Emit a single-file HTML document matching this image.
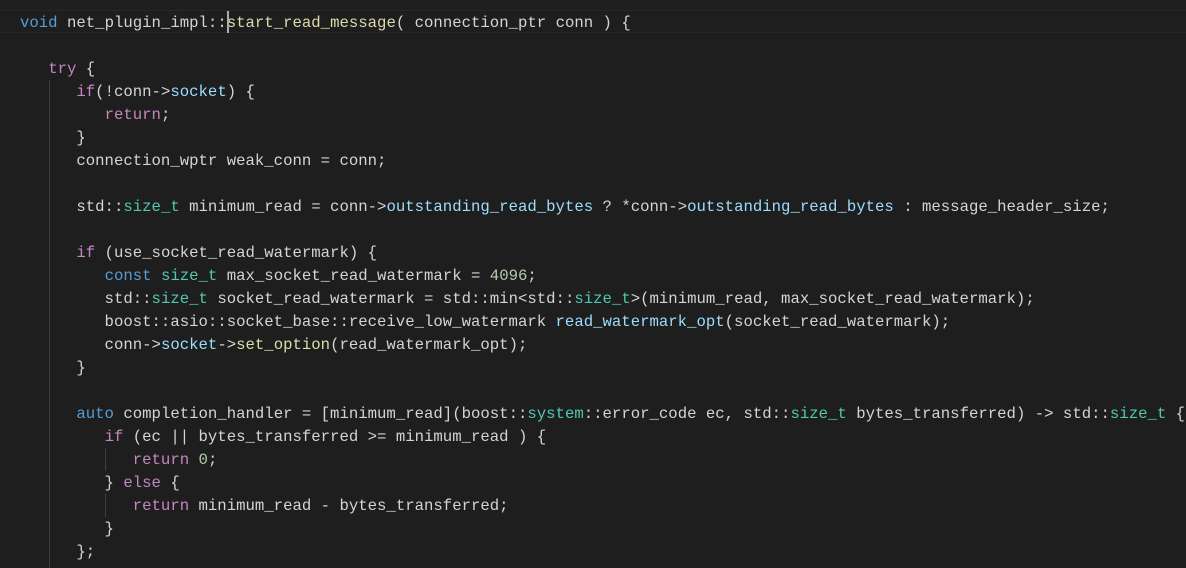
<!DOCTYPE html>
<html><head><style>
html,body{margin:0;padding:0;background:#1e1e1e;width:1186px;height:568px;overflow:hidden}
.l{position:absolute;left:20px;height:23px;line-height:25px;white-space:pre;font-family:"Liberation Mono",monospace;font-size:15.67px;color:#d4d4d4}
.k{color:#569cd6}.c{color:#c586c0}.v{color:#9cdcfe}.t{color:#4ec9b0}.f{color:#dcdcaa}.n{color:#b5cea8}
.g{position:absolute;width:1px;background:#404040}
#hl{position:absolute;left:0;top:10px;width:1186px;height:23px;border-top:1px solid #282828;border-bottom:1px solid #282828;box-sizing:border-box}
#cur{position:absolute;left:227px;top:11px;width:2px;height:22px;background:#aeafad}
</style></head><body>
<div id="hl"></div>
<div class="g" style="left:49px;top:80px;height:488px"></div>
<div class="g" style="left:105px;top:448px;height:23px"></div>
<div class="g" style="left:105px;top:494px;height:23px"></div>
<div class="l" style="top:11px"><span class="k">void</span> net_plugin_impl::<span class="f">start_read_message</span>( connection_ptr conn ) {</div>
<div id="cur"></div>
<div class="l" style="top:57px">   <span class="c">try</span> {</div>
<div class="l" style="top:80px">      <span class="c">if</span>(!conn-&gt;<span class="v">socket</span>) {</div>
<div class="l" style="top:103px">         <span class="c">return</span>;</div>
<div class="l" style="top:126px">      }</div>
<div class="l" style="top:149px">      connection_wptr weak_conn = conn;</div>
<div class="l" style="top:195px">      std::<span class="t">size_t</span> minimum_read = conn-&gt;<span class="v">outstanding_read_bytes</span> ? *conn-&gt;<span class="v">outstanding_read_bytes</span> : message_header_size;</div>
<div class="l" style="top:241px">      <span class="c">if</span> (use_socket_read_watermark) {</div>
<div class="l" style="top:264px">         <span class="k">const</span> <span class="t">size_t</span> max_socket_read_watermark = <span class="n">4096</span>;</div>
<div class="l" style="top:287px">         std::<span class="t">size_t</span> socket_read_watermark = std::min&lt;std::<span class="t">size_t</span>&gt;(minimum_read, max_socket_read_watermark);</div>
<div class="l" style="top:310px">         boost::asio::socket_base::receive_low_watermark <span class="v">read_watermark_opt</span>(socket_read_watermark);</div>
<div class="l" style="top:333px">         conn-&gt;<span class="v">socket</span>-&gt;<span class="f">set_option</span>(read_watermark_opt);</div>
<div class="l" style="top:356px">      }</div>
<div class="l" style="top:402px">      <span class="k">auto</span> completion_handler = [minimum_read](boost::<span class="t">system</span>::error_code ec, std::<span class="t">size_t</span> bytes_transferred) -&gt; std::<span class="t">size_t</span> {</div>
<div class="l" style="top:425px">         <span class="c">if</span> (ec || bytes_transferred &gt;= minimum_read ) {</div>
<div class="l" style="top:448px">            <span class="c">return</span> <span class="n">0</span>;</div>
<div class="l" style="top:471px">         } <span class="c">else</span> {</div>
<div class="l" style="top:494px">            <span class="c">return</span> minimum_read - bytes_transferred;</div>
<div class="l" style="top:517px">         }</div>
<div class="l" style="top:540px">      };</div>
</body></html>
